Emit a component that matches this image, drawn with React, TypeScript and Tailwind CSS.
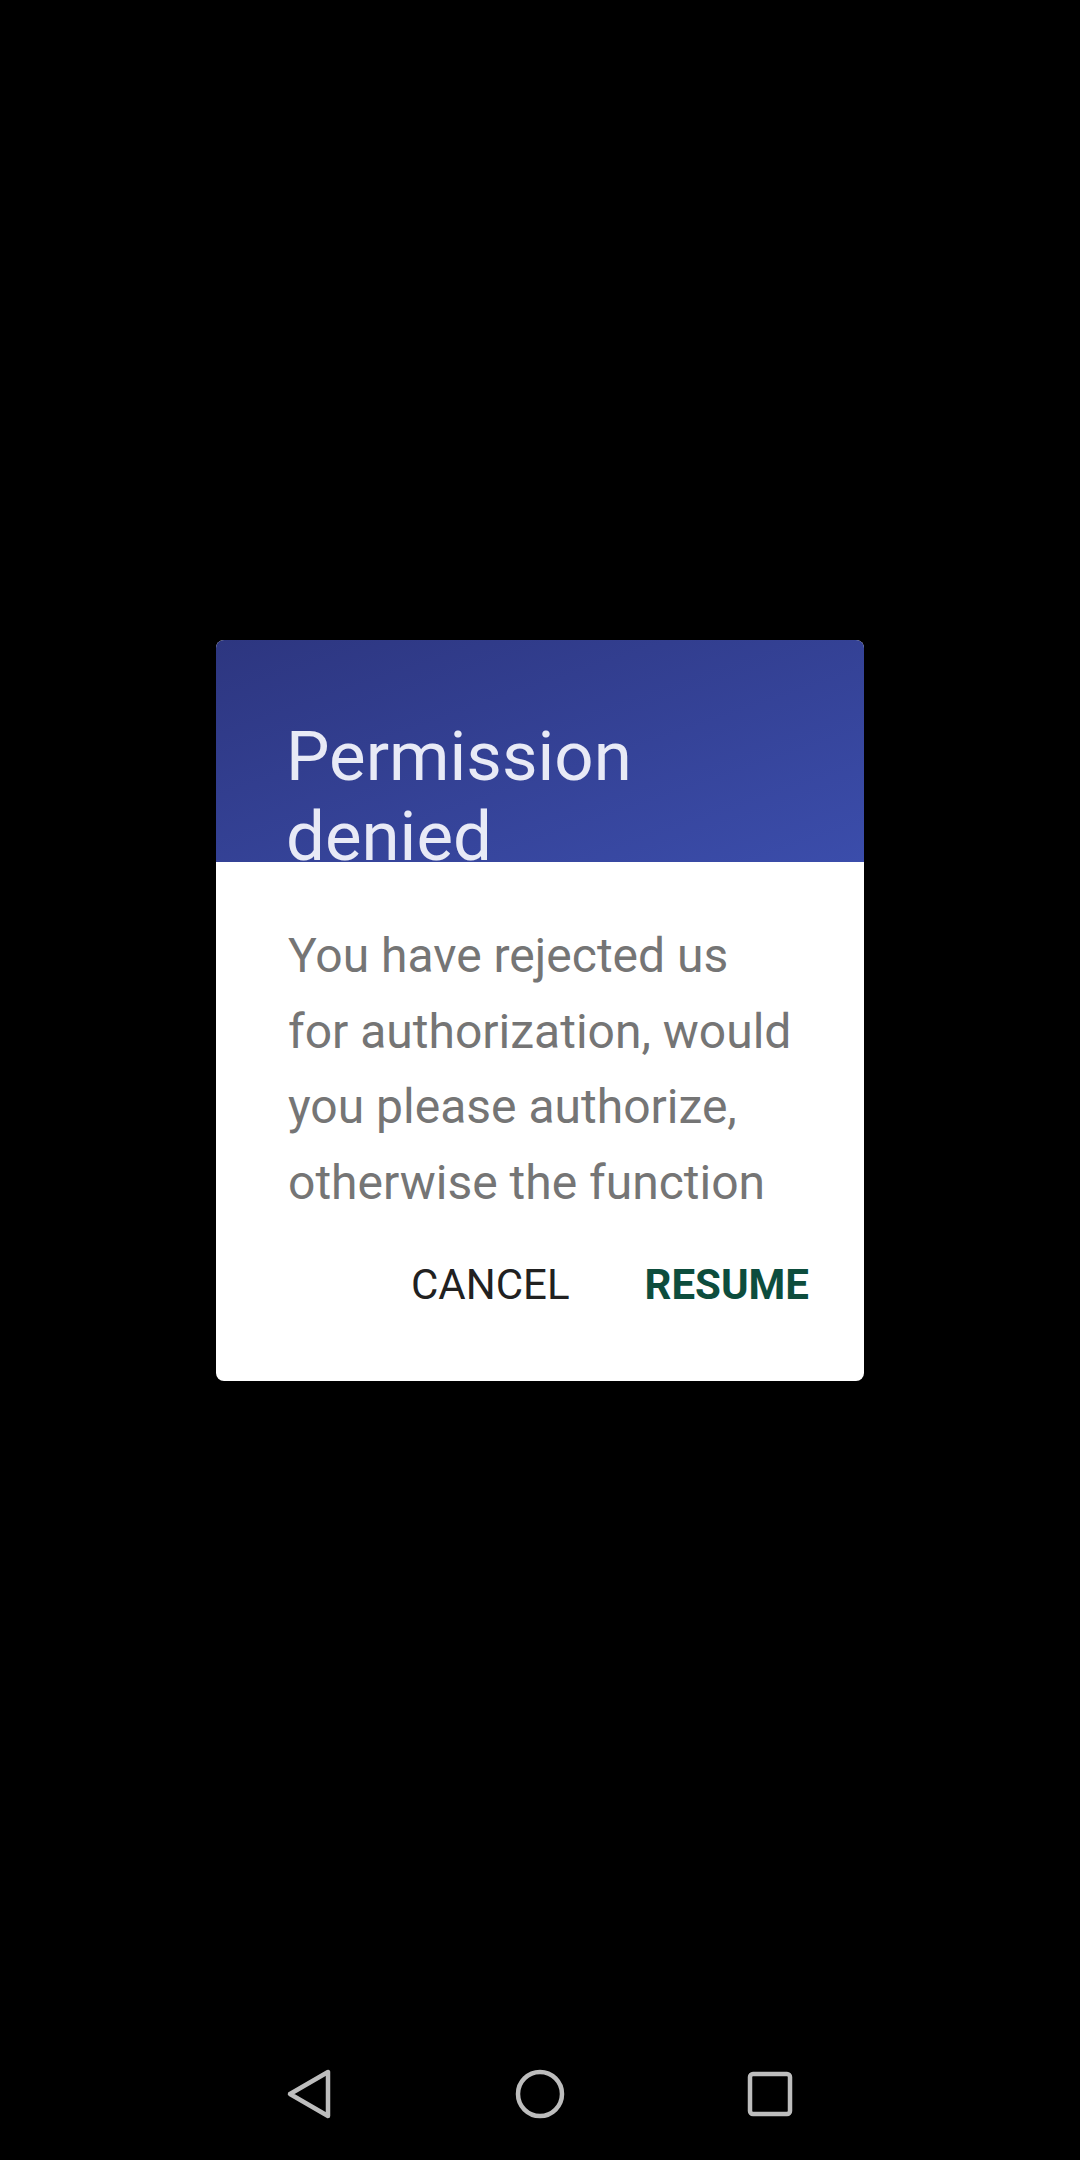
import React from "react";

export default function App() {
  const font = { fontFamily: "Roboto, 'Noto Sans', sans-serif" };
  return (
    <div className="w-[1080px] h-[2160px] bg-black flex flex-col" style={font}>
      <div className="flex-1 pt-[640px]">
        <div className="mx-auto w-[648px] rounded-lg overflow-hidden bg-white">
          <div className="h-[222px] overflow-hidden bg-gradient-to-br from-[#2d3680] to-[#3b4dab] pl-[70px] pt-[77px]">
            <div className="text-[69px] leading-[80px] text-[#e8eaf6] w-[420px]">
              Permission denied
            </div>
          </div>
          <div className="pl-[72px] pt-[56px]">
            <div className="h-[302px] overflow-hidden text-[48px] leading-[75.5px] text-[#757575]">
              <div className="whitespace-nowrap">You have rejected us</div>
              <div className="whitespace-nowrap">for authorization, would</div>
              <div className="whitespace-nowrap">you please authorize,</div>
              <div className="whitespace-nowrap">otherwise the function</div>
            </div>
          </div>
          <div className="flex justify-end items-center gap-[75px] pr-[55px] pt-[41px] pb-[72px]">
            <span className="text-[42px] leading-[48px] text-[#212121]">CANCEL</span>
            <span className="text-[42px] leading-[48px] font-bold text-[#0d4d3d]">RESUME</span>
          </div>
        </div>
      </div>
      <div className="h-[132px] flex justify-center items-center">
        <div className="w-[230px] flex justify-center">
          <svg width="52" height="52" viewBox="0 0 52 52" fill="none" stroke="#bdbdbd" strokeWidth="4.5" strokeLinejoin="round">
            <polygon points="44,4 44,48 6,26" />
          </svg>
        </div>
        <div className="w-[230px] flex justify-center">
          <svg width="52" height="52" viewBox="0 0 52 52" fill="none" stroke="#bdbdbd" strokeWidth="4.5">
            <circle cx="26" cy="26" r="22" />
          </svg>
        </div>
        <div className="w-[230px] flex justify-center">
          <svg width="52" height="52" viewBox="0 0 52 52" fill="none" stroke="#bdbdbd" strokeWidth="4.5">
            <rect x="6" y="6" width="40" height="40" rx="3" />
          </svg>
        </div>
      </div>
    </div>
  );
}
